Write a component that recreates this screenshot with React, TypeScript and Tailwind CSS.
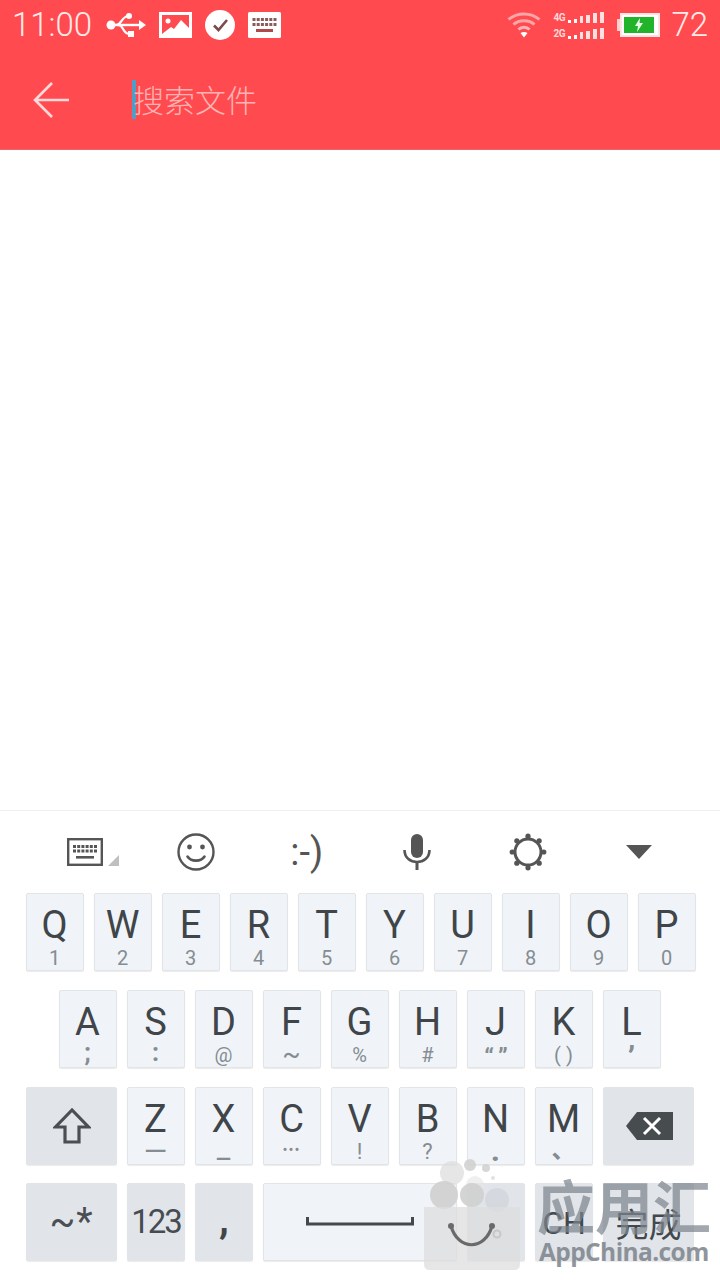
import React from "react";

const sans = "font-['Roboto','Noto_Sans_CJK_SC',sans-serif]";

type KeyProps = { children?: React.ReactNode; w?: string; dark?: boolean; top?: boolean };

function Key({ children, w = "w-[58px]", dark = false, top = false }: KeyProps) {
  return (
    <div
      className={`${w} h-[78px] shrink-0 rounded-[2px] border border-[#e2e5e7] shadow-[0_1px_1px_rgba(0,0,0,0.08)] flex flex-col items-center ${
        top ? "justify-start pr-[1px]" : "justify-center"
      } ${dark ? "bg-[#e1e5ea]" : "bg-[#f0f4f8]"}`}
    >
      {children}
    </div>
  );
}

function Letter({ c, sub, cls }: { c: string; sub: string; cls?: string }) {
  return (
    <Key top>
      <span className="block h-[40px] mt-[11px] text-[38px] leading-[40px] text-[#3f4549]">{c}</span>
      <span className={`block h-[26px] leading-[26px] whitespace-nowrap text-[#858c92] ${cls ?? "text-[20px]"}`}>{sub}</span>
    </Key>
  );
}

function Usb() {
  return (
    <svg width="40" height="26" viewBox="0 0 40 26" fill="none" className="shrink-0">
      <circle cx="5" cy="13" r="4.500" fill="#fff" />
      <path d="M5 13H34" stroke="#fff" strokeWidth="2.400" />
      <path d="M33 8l7 5-7 5z" fill="#fff" />
      <path d="M10 13C16 13 15 5 22 4" stroke="#fff" strokeWidth="2.200" />
      <path d="M12 13C18 13 16 21 23 22" stroke="#fff" strokeWidth="2.200" />
      <circle cx="23" cy="4" r="3" fill="#fff" />
      <rect x="22" y="19" width="6" height="6" fill="#fff" />
    </svg>
  );
}

function ImageIcon() {
  return (
    <svg width="33" height="26" viewBox="0 0 33 26" className="shrink-0 ml-[13px]">
      <rect width="33" height="26" fill="#fff" />
      <rect x="3" y="3" width="27" height="19" fill="#ff4b50" />
      <path d="M3 22l9-7 3 2 7-9 8 8v6z" fill="#fff" />
      <circle cx="9" cy="9" r="2.500" fill="#fff" />
    </svg>
  );
}

function CheckIcon() {
  return (
    <svg width="30" height="30" viewBox="0 0 30 30" className="shrink-0 ml-[13px]">
      <circle cx="15" cy="15" r="15" fill="#fff" />
      <path d="M9 15.500l4.500 4.500L22 10" stroke="#7a4a4c" strokeWidth="2.600" fill="none" />
    </svg>
  );
}

function KeyboardStatus() {
  return (
    <svg width="33" height="26" viewBox="0 0 33 26" className="shrink-0 ml-[13px]">
      <rect width="33" height="26" rx="1.500" fill="#fff" />
      {[0, 1, 2, 3, 4, 5].map((i) => (
        <rect key={i} x={4.5 + i * 4.2} y="6" width="3" height="3" fill="#8c5a5c" />
      ))}
      {[0, 1, 2, 3, 4, 5].map((i) => (
        <rect key={i} x={4.5 + i * 4.2} y="11" width="3" height="3" fill="#8c5a5c" />
      ))}
      <rect x="8" y="17" width="17" height="3" fill="#b0484c" />
    </svg>
  );
}

function Wifi() {
  return (
    <svg width="34" height="26" viewBox="0 0 34 26" fill="none" className="shrink-0">
      <path d="M1.500 7.500C10 0 24 0 32.500 7.500" stroke="#ffa6a8" strokeWidth="3" />
      <path d="M6.500 12.500C12 7.500 22 7.500 27.500 12.500" stroke="#ffa6a8" strokeWidth="3" />
      <path d="M11.500 17.500C14.500 14.500 19.500 14.500 22.500 17.500" stroke="#ffb6b8" strokeWidth="3" />
      <path d="M13.500 21L17 25.500 20.500 21C18.500 19.500 15.500 19.500 13.500 21z" fill="#fff" />
    </svg>
  );
}

function SignalRow() {
  return (
    <div className="flex items-end gap-[3px] h-[11px] ml-[3px]">
      <div className="w-[3px] h-[3px] bg-[#fff]" />
      <div className="w-[3px] h-[4px] bg-[#fff]" />
      <div className="w-[3px] h-[7px] bg-[#ffe0e0]" />
      <div className="w-[4px] h-[8px] bg-[#ffe0e0]" />
      <div className="w-[4px] h-[10px] bg-[#ffe0e0]" />
      <div className="w-[4px] h-[11px] bg-[#ffe0e0]" />
    </div>
  );
}

function Signal() {
  return (
    <div className="ml-[12px] w-[51px] flex flex-col gap-[5px] shrink-0">
      <div className="flex items-center">
        <span className="text-[10px] leading-[11px] font-bold text-[#ffd8d8] w-[13px] tracking-[-0.5px]">4G</span>
        <SignalRow />
      </div>
      <div className="flex items-center">
        <span className="text-[10px] leading-[11px] font-bold text-[#ffd8d8] w-[13px] tracking-[-0.5px]">2G</span>
        <SignalRow />
      </div>
    </div>
  );
}

function Battery() {
  return (
    <div className="flex items-center ml-[13px] shrink-0">
      <div className="w-[3px] h-[12px] bg-[#ffd0d0]" />
      <div className="w-[40px] h-[24px] border-[2px] border-[#ffe4e4] bg-white p-[2px]">
        <div className="h-full w-[30px] bg-[#21b32a] flex items-center justify-center">
          <svg width="10" height="14" viewBox="0 0 10 14">
            <path d="M6 0L1 8h3l-1 6 6-9H5.500z" fill="#e8ffe8" />
          </svg>
        </div>
      </div>
    </div>
  );
}

function BackArrow() {
  return (
    <svg width="38" height="38" viewBox="0 0 38 38" fill="none" className="shrink-0 mt-[1px]">
      <path d="M2 19H36M19 2L2 19l17 17" stroke="#ffd9d9" strokeWidth="2.600" />
    </svg>
  );
}

function KeyboardTool() {
  return (
    <div className="relative w-[52px] h-[28px]">
      <svg width="36" height="28" viewBox="0 0 36 28" fill="none">
        <rect x="1.200" y="1.200" width="33.600" height="25.600" stroke="#555" strokeWidth="2.400" />
        {[0, 1].map((r) =>
          [0, 1, 2, 3, 4, 5].map((i) => (
            <rect key={`${r}-${i}`} x={6 + i * 4.2} y={7 + r * 4.5} width="3" height="3" fill="#555" />
          ))
        )}
        <rect x="9" y="18" width="18" height="2.600" fill="#555" />
      </svg>
      <div className="absolute left-[41px] top-[17px] w-0 h-0 border-l-[11px] border-l-transparent border-b-[11px] border-b-[#bfbfbf]" />
    </div>
  );
}

function Smile() {
  return (
    <svg width="38" height="38" viewBox="0 0 38 38" fill="none">
      <circle cx="19" cy="19" r="17.500" stroke="#555" strokeWidth="2.400" />
      <circle cx="12.500" cy="14" r="2.400" fill="#555" />
      <circle cx="25.500" cy="14" r="2.400" fill="#555" />
      <path d="M10.500 23.500C14 29 24 29 27.500 23.500" stroke="#555" strokeWidth="2.600" strokeLinecap="round" />
    </svg>
  );
}

function Mic() {
  return (
    <svg width="28" height="36" viewBox="0 0 28 36" fill="none">
      <rect x="8" y="0" width="12" height="24" rx="6" fill="#555" />
      <path d="M1.500 16C1.500 32 26.500 32 26.500 16" stroke="#555" strokeWidth="2.600" />
      <rect x="12.500" y="28" width="3" height="8" fill="#555" />
    </svg>
  );
}

function Gear() {
  const teeth = [0, 45, 90, 135, 180, 225, 270, 315];
  return (
    <svg width="38" height="38" viewBox="0 0 38 38" fill="none">
      <circle cx="19" cy="19" r="13" stroke="#555" strokeWidth="3" />
      {teeth.map((a) => (
        <circle key={a} cx={19 + 15.8 * Math.cos((a * Math.PI) / 180)} cy={19 + 15.8 * Math.sin((a * Math.PI) / 180)} r="2.600" fill="#555" />
      ))}
    </svg>
  );
}

function Shift() {
  return (
    <svg width="38" height="38" viewBox="0 0 38 38" fill="none">
      <path d="M19 3L2.500 20H12V35H26V20H35.500z" stroke="#4a4f53" strokeWidth="3.200" />
    </svg>
  );
}

function Backspace() {
  return (
    <svg width="48" height="30" viewBox="0 0 48 30">
      <path d="M12 1H48V29H12L1 15z" fill="#474c4f" />
      <path d="M19 7l16 16M35 7L19 23" stroke="#fff" strokeWidth="3" />
    </svg>
  );
}

function Watermark() {
  return (
    <div className="absolute left-[420px] top-[1158px] w-[300px] h-[122px] pointer-events-none">
      <svg width="104" height="114" viewBox="0 0 104 114" className="absolute left-0 top-0">
        <circle cx="32" cy="15" r="12" fill="#dcdcdc" fillOpacity="0.7" />
        <circle cx="50" cy="7" r="6" fill="#cfcfcf" fillOpacity="0.85" />
        <circle cx="66" cy="10" r="4" fill="#d0d0d0" fillOpacity="0.85" />
        <circle cx="73" cy="20" r="2" fill="#dcdcdc" fillOpacity="0.85" />
        <circle cx="55" cy="27" r="9" fill="#e4e4e4" fillOpacity="0.6" />
        <circle cx="24" cy="37" r="14" fill="#cfcfcf" fillOpacity="0.9" />
        <circle cx="52" cy="37" r="12" fill="#cfcfcf" fillOpacity="0.9" />
        <circle cx="77" cy="42" r="12" fill="#d0d4da" fillOpacity="0.7" />
        <path d="M4 49H100V106Q100 112 94 112H10Q4 112 4 106z" fill="#dcdcdc" fillOpacity="0.72" />
        <path d="M31 68C38 93 65 93 72 68" stroke="#6a6a6a" strokeWidth="3.200" fill="none" />
        <circle cx="31" cy="68" r="3" fill="#6a6a6a" />
        <circle cx="72" cy="68" r="3" fill="#6a6a6a" />
        <circle cx="77" cy="76" r="3.500" stroke="#c7c7c7" strokeWidth="2" fill="none" />
      </svg>
      <div className="absolute left-[117px] top-[13px] text-[58px] leading-[66px] font-bold text-[#7c848c] opacity-70 whitespace-nowrap font-['Noto_Sans_CJK_SC',sans-serif]">
        应用汇
      </div>
      <div className="absolute left-[119px] top-[79px] text-[24.500px] leading-[30px] font-bold text-[#7d838a] opacity-85 whitespace-nowrap font-['Open_Sans',sans-serif] tracking-[-0.6px]">
        AppChina.com
      </div>
    </div>
  );
}

const row1: [string, string][] = [["Q","1"],["W","2"],["E","3"],["R","4"],["T","5"],["Y","6"],["U","7"],["I","8"],["O","9"],["P","0"]];
const row2: [string, string, string?][] = [
  ["A", ";", "-mt-[2px] text-[25px] font-bold"],
  ["S", ":", "-mt-[2px] text-[25px] font-bold"],
  ["D", "@"],
  ["F", "~", "-mt-[1px] text-[27px]"],
  ["G", "%"],
  ["H", "#"],
  ["J", "“ ”", "mt-[2px] text-[24px] font-bold tracking-[-1px]"],
  ["K", "( )"],
  ["L", "’", "mt-[2px] text-[32px] font-bold"],
];
const row3: [string, string, string?][] = [
  ["Z", "—", "-mt-[1px] text-[30px]"],
  ["X", "_", "-mt-[4px] text-[30px]"],
  ["C", "•••", "-mt-[2px] text-[15px] tracking-[1px]"],
  ["V", "!", "text-[22px]"],
  ["B", "?", "text-[22px]"],
  ["N", ".", "-mt-[2px] text-[32px] font-bold"],
  ["M", "、", "-mt-[2px] text-[24px] font-bold"],
];

export default function App() {
  return (
    <div className={`relative w-[720px] h-[1280px] flex flex-col bg-white overflow-hidden ${sans}`}>
      <div className="h-[150px] shrink-0 bg-[#ff4b50] border-b border-[#e8686a] flex flex-col">
        <div className="h-[50px] flex items-center pl-[12px] pr-[12px] text-white">
          <span className="text-[33px] leading-[50px] font-light text-[#ffeaea] w-[94px]">11:00</span>
          <Usb />
          <ImageIcon />
          <CheckIcon />
          <KeyboardStatus />
          <div className="flex-1" />
          <Wifi />
          <Signal />
          <Battery />
          <span className="ml-[11px] text-[33px] leading-[50px] font-light text-[#ffeaea]">72</span>
        </div>
        <div className="flex-1 flex items-center pl-[33px]">
          <BackArrow />
          <div className="ml-[61px] w-[4px] h-[39px] bg-[#4f9ec6]" />
          <span className="-ml-[3px] -mt-[1px] text-[31px] leading-[40px] font-light text-[#ffb3b3] font-['Noto_Sans_CJK_SC',sans-serif]">搜索文件</span>
        </div>
      </div>
      <div className="flex-1" />
      <div className="h-[470px] shrink-0 border-t border-[#f0f0f0] bg-white">
        <div className="h-[82px] grid grid-cols-6 pl-[30px] pr-[26px] items-center">
          <div className="flex justify-center pl-[16px]"><KeyboardTool /></div>
          <div className="flex justify-center"><Smile /></div>
          <div className="flex justify-center text-[38px] leading-[40px] text-[#555]">:-)</div>
          <div className="flex justify-center"><Mic /></div>
          <div className="flex justify-center"><Gear /></div>
          <div className="flex justify-center">
            <div className="w-0 h-0 border-l-[13px] border-r-[13px] border-t-[14px] border-l-transparent border-r-transparent border-t-[#555]" />
          </div>
        </div>
        <div className="flex gap-[10px] pl-[26px]">
          {row1.map(([c, s]) => <Letter key={c} c={c} sub={s} />)}
        </div>
        <div className="flex gap-[10px] pl-[59px] mt-[19px]">
          {row2.map(([c, s, k]) => <Letter key={c} c={c} sub={s} cls={k} />)}
        </div>
        <div className="flex gap-[10px] pl-[26px] mt-[19px]">
          <Key w="w-[91px]" dark><Shift /></Key>
          {row3.map(([c, s, k]) => <Letter key={c} c={c} sub={s} cls={k} />)}
          <Key w="w-[91px]" dark><Backspace /></Key>
        </div>
        <div className="flex gap-[10px] pl-[26px] mt-[18px]">
          <Key w="w-[91px]" dark><span className="text-[38px] leading-[40px] text-[#4a4f53] tracking-[1px]">~*</span></Key>
          <Key dark><span className="text-[33px] leading-[40px] text-[#474c52] tracking-[-2px]">123</span></Key>
          <Key dark><span className="text-[40px] leading-[40px] font-bold text-[#3f4549] -mt-[4px]">,</span></Key>
          <Key w="w-[194px]">
            <svg width="108" height="10" viewBox="0 0 108 10">
              <path d="M1.500 0V7H106.500V0" stroke="#44494d" strokeWidth="3" fill="none" />
            </svg>
          </Key>
          <Key dark />
          <Key dark><span className="text-[32px] leading-[40px] text-[#43484d] mt-[2px]">CH</span></Key>
          <Key w="w-[91px]" dark><span className="text-[33px] leading-[40px] text-[#43484d] mt-[2px] font-['Noto_Sans_CJK_SC',sans-serif]">完成</span></Key>
        </div>
      </div>
      <Watermark />
    </div>
  );
}
